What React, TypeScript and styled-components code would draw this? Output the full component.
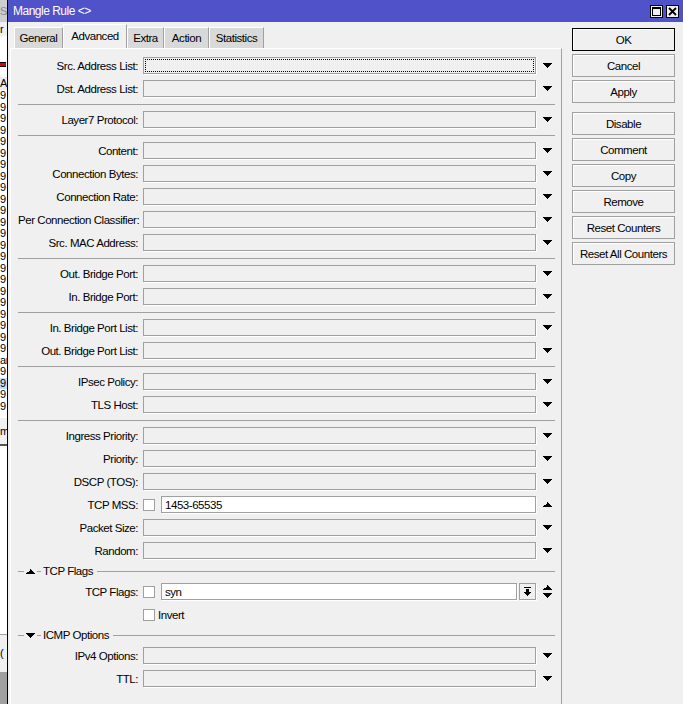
import { Fragment } from 'react';
import styled, { createGlobalStyle } from 'styled-components';

const uiFont = `"Liberation Sans", Arial, sans-serif`;

const GlobalStyle = createGlobalStyle`
  html, body {
    margin: 0;
    padding: 0;
    background: #f0f0f0;
  }
  body {
    font-family: ${uiFont};
    font-size: 11.5px;
    letter-spacing: -0.45px;
    color: #000;
  }
`;

const Screen = styled.div`
  display: flex;
  width: 683px;
  height: 704px;
  overflow: hidden;
`;

/* the rule list window peeking out behind the dialog */
const BackWindow = styled.div`
  width: 7px;
  border-right: 1px solid #000;
  display: flex;
  flex-direction: column;
  overflow: hidden;
  background: #fff;
`;

const BackBand = styled.div<{ $h?: number; $bg: string; $color?: string }>`
  height: ${(p) => (p.$h ? `${p.$h}px` : 'auto')};
  flex: ${(p) => (p.$h ? '0 0 auto' : '1')};
  background: ${(p) => p.$bg};
  color: ${(p) => p.$color || '#000'};
  font-size: 11px;
  line-height: ${(p) => (p.$h ? `${p.$h}px` : 'normal')};
  white-space: nowrap;
  overflow: hidden;
  display: flex;
  align-items: center;
`;

const RedMark = styled.div`
  width: 6px;
  height: 3px;
  background: #e00000;
  border-top: 1px solid #000;
  border-bottom: 1px solid #000;
`;

const Dialog = styled.div`
  flex: 1;
  min-width: 0;
  display: flex;
  flex-direction: column;
  background: #f0f0f0;
`;

const TitleBar = styled.div`
  height: 22px;
  background: #5052c9;
  color: #fff;
  font-size: 12px;
  letter-spacing: -0.5px;
  display: flex;
  align-items: center;
  padding: 0 4px 0 5px;
`;

const TitleText = styled.div`
  flex: 1;
`;

const TitleButton = styled.div`
  width: 13px;
  height: 13px;
  box-sizing: border-box;
  border: 1px solid #000;
  background: #f0f0f0;
  margin-left: 3px;
  display: flex;
  align-items: center;
  justify-content: center;
`;

const Body = styled.div`
  flex: 1;
  display: flex;
  min-height: 0;
`;

const Main = styled.div`
  width: 554px;
  padding-left: 2px;
  box-sizing: border-box;
  display: flex;
  flex-direction: column;
`;

const TabBar = styled.div`
  height: 26px;
  display: flex;
  align-items: flex-end;
  padding-left: 4px;
`;

const Tab = styled.div<{ $active?: boolean; $w: number }>`
  width: ${(p) => p.$w}px;
  height: ${(p) => (p.$active ? 24 : 21)}px;
  box-sizing: border-box;
  background: ${(p) => (p.$active ? '#f0f0f0' : '#d9d9d9')};
  border-top: 1px solid #fff;
  border-left: 1px solid #fff;
  border-right: 1px solid #a0a0a0;
  display: flex;
  align-items: center;
  justify-content: center;
  padding-bottom: ${(p) => (p.$active ? 2 : 0)}px;
`;

const Panel = styled.div`
  flex: 1;
  border-top: 1px solid #fff;
  border-left: 1px solid #fff;
  border-right: 1px solid #a0a0a0;
  padding-top: 5px;
  display: flex;
  flex-direction: column;
`;

const Row = styled.div`
  height: 23px;
  display: flex;
  align-items: center;
  padding-left: 7px;
`;

const Label = styled.div`
  width: 120px;
  flex-shrink: 0;
  margin-right: 5px;
  text-align: right;
  white-space: nowrap;
`;

const Field = styled.div<{ $w?: number; $on?: boolean; $focus?: boolean }>`
  width: ${(p) => p.$w || 393}px;
  height: 17px;
  box-sizing: border-box;
  border: 1px solid #a0a0a0;
  box-shadow: 1px 1px 0 #fff;
  background: ${(p) => (p.$on ? '#fff' : '#f0f0f0')};
  padding: 0 3px;
  display: flex;
  align-items: center;
  flex-shrink: 0;
  outline: ${(p) => (p.$focus ? '1px dotted #000' : 'none')};
  outline-offset: -3px;
`;

const FieldButton = styled.div`
  width: 17px;
  height: 17px;
  box-sizing: border-box;
  margin-left: 2px;
  border: 1px solid #a0a0a0;
  box-shadow: 1px 1px 0 #fff;
  background: #f0f0f0;
  display: flex;
  align-items: center;
  justify-content: center;
`;

const Check = styled.div`
  width: 12px;
  height: 12px;
  box-sizing: border-box;
  border: 1px solid #a0a0a0;
  background: #fff;
  flex-shrink: 0;
  margin-right: 6px;
`;

const CheckText = styled.span`
  margin-left: -3px;
`;

const ArrowSlot = styled.div`
  width: 9px;
  margin-left: 7px;
  display: flex;
  flex-direction: column;
  align-items: center;
  gap: 3px;
`;

const Separator = styled.div`
  height: 1px;
  background: #a0a0a0;
  margin: 4px 6px 3px 7px;
`;

const GroupHeader = styled.div`
  height: 18px;
  display: flex;
  align-items: center;
  padding: 0 6px 0 7px;
`;

const GroupLine = styled.div<{ $w?: number }>`
  height: 1px;
  background: #a0a0a0;
  width: ${(p) => (p.$w ? `${p.$w}px` : 'auto')};
  flex: ${(p) => (p.$w ? '0 0 auto' : '1')};
`;

const GroupIcon = styled.div`
  margin: 0 2px;
  display: flex;
`;

const GroupTitle = styled.div`
  margin: 0 4px 0 2px;
`;

const Side = styled.div`
  padding: 6px 0 0 10px;
  display: flex;
  flex-direction: column;
  gap: 3px;
`;

const Btn = styled.div<{ $default?: boolean }>`
  width: 103px;
  height: 23px;
  box-sizing: border-box;
  border: 1px solid ${(p) => (p.$default ? '#000' : '#a0a0a0')};
  background: #f0f0f0;
  box-shadow: inset 1px 1px 0 #fff;
  white-space: nowrap;
  display: flex;
  align-items: center;
  justify-content: center;
`;

const BtnGap = styled.div`
  height: 3px;
`;

const DownArrow = () => (
  <svg width="9" height="5" viewBox="0 0 9 5" shapeRendering="crispEdges">
    <path d="M0 0h9v1H8v1H7v1H6v1H5v1H4V4H3V3H2V2H1V1H0z" fill="#000" />
  </svg>
);

const UpArrow = () => (
  <svg width="9" height="5" viewBox="0 0 9 5" shapeRendering="crispEdges">
    <path d="M4 0h1v1h1v1h1v1h1v1h1v1H0V4h1V3h2V2h1z" fill="#000" />
  </svg>
);

const ToBottomIcon = () => (
  <svg width="7" height="9" viewBox="0 0 7 9" shapeRendering="crispEdges">
    <path d="M0 0h7v1H0zM2 2h3v3h2v1H6v1H5v1H4v1H3V8H2V7H1V6H0V5h2z" fill="#000" />
  </svg>
);

const MaximizeIcon = () => (
  <svg width="9" height="9" viewBox="0 0 9 9" shapeRendering="crispEdges">
    <path d="M0 0h9v9H0zM1 2v6h7V2z" fill="#000" />
  </svg>
);

const CloseIcon = () => (
  <svg width="9" height="9" viewBox="0 0 9 9">
    <path d="M1 1l7 7M8 1L1 8" stroke="#000" strokeWidth="1.8" />
  </svg>
);

const tabs = [
  { name: 'General', w: 49 },
  { name: 'Advanced', w: 64, active: true },
  { name: 'Extra', w: 37 },
  { name: 'Action', w: 45 },
  { name: 'Statistics', w: 55 },
];

type Item = { label: string; focus?: boolean; mss?: boolean };

const sections: Item[][] = [
  [{ label: 'Src. Address List:', focus: true }, { label: 'Dst. Address List:' }],
  [{ label: 'Layer7 Protocol:' }],
  [
    { label: 'Content:' },
    { label: 'Connection Bytes:' },
    { label: 'Connection Rate:' },
    { label: 'Per Connection Classifier:' },
    { label: 'Src. MAC Address:' },
  ],
  [{ label: 'Out. Bridge Port:' }, { label: 'In. Bridge Port:' }],
  [{ label: 'In. Bridge Port List:' }, { label: 'Out. Bridge Port List:' }],
  [{ label: 'IPsec Policy:' }, { label: 'TLS Host:' }],
  [
    { label: 'Ingress Priority:' },
    { label: 'Priority:' },
    { label: 'DSCP (TOS):' },
    { label: 'TCP MSS:', mss: true },
    { label: 'Packet Size:' },
    { label: 'Random:' },
  ],
];

const buttons = [
  ['OK', 'Cancel', 'Apply'],
  ['Disable', 'Comment', 'Copy', 'Remove', 'Reset Counters', 'Reset All Counters'],
];

const listRows = Array.from({ length: 28 }, (_, i) => i);

const FieldRow = ({ item }: { item: Item }) => {
  if (item.mss) {
    return (
      <Row>
        <Label>{item.label}</Label>
        <Check />
        <Field $w={375} $on>
          1453-65535
        </Field>
        <ArrowSlot>
          <UpArrow />
        </ArrowSlot>
      </Row>
    );
  }
  return (
    <Row>
      <Label>{item.label}</Label>
      <Field $focus={item.focus} />
      <ArrowSlot>
        <DownArrow />
      </ArrowSlot>
    </Row>
  );
};

const Group = ({ title, open }: { title: string; open?: boolean }) => (
  <GroupHeader>
    <GroupLine $w={6} />
    <GroupIcon>{open ? <UpArrow /> : <DownArrow />}</GroupIcon>
    <GroupLine $w={4} />
    <GroupTitle>{title}</GroupTitle>
    <GroupLine />
  </GroupHeader>
);

const App = () => {
  return (
    <Screen>
      <GlobalStyle />
      <BackWindow>
        <BackBand $h={22} $bg="#cdcdcd" $color="#8a8a8a">
          Se
        </BackBand>
        <BackBand $h={14} $bg="#f0f0f0">
          r
        </BackBand>
        <BackBand $h={26} $bg="#fff" />
        <BackBand $h={5} $bg="#fff">
          <RedMark />
        </BackBand>
        <BackBand $h={10} $bg="#fff" />
        <BackBand $h={13} $bg="#ececec">
          Ad
        </BackBand>
        {listRows.map((i) => (
          <BackBand key={i} $h={11.5} $bg={i === 25 ? '#c5dcf5' : '#fff'}>
            {i === 23 ? 'ar' : '9'}
          </BackBand>
        ))}
        <BackBand $h={6} $bg="#fff" />
        <BackBand $h={26} $bg="#f0f0f0">
          m
        </BackBand>
        <BackBand $h={2} $bg="#555" />
        <BackBand $h={188} $bg="#fff" />
        <BackBand $h={1} $bg="#a0a0a0" />
        <BackBand $h={37} $bg="#f0f0f0">
          (
        </BackBand>
        <BackBand $bg="#a0a0a0" />
      </BackWindow>

      <Dialog>
        <TitleBar>
          <TitleText>Mangle Rule &lt;&gt;</TitleText>
          <TitleButton>
            <MaximizeIcon />
          </TitleButton>
          <TitleButton>
            <CloseIcon />
          </TitleButton>
        </TitleBar>

        <Body>
          <Main>
            <TabBar>
              {tabs.map((t) => (
                <Tab key={t.name} $w={t.w} $active={t.active}>
                  {t.name}
                </Tab>
              ))}
            </TabBar>
            <Panel>
              {sections.map((section, si) => (
                <div key={si}>
                  {si > 0 && <Separator />}
                  {section.map((item) => (
                    <FieldRow key={item.label} item={item} />
                  ))}
                </div>
              ))}

              <Group title="TCP Flags" open />
              <Row>
                <Label>TCP Flags:</Label>
                <Check />
                <Field $w={356} $on>
                  syn
                </Field>
                <FieldButton>
                  <ToBottomIcon />
                </FieldButton>
                <ArrowSlot>
                  <UpArrow />
                  <DownArrow />
                </ArrowSlot>
              </Row>
              <Row>
                <Label />
                <Check />
                <CheckText>Invert</CheckText>
              </Row>

              <Group title="ICMP Options" />
              <FieldRow item={{ label: 'IPv4 Options:' }} />
              <FieldRow item={{ label: 'TTL:' }} />
            </Panel>
          </Main>

          <Side>
            {buttons.map((group, gi) => (
              <Fragment key={gi}>
                {gi > 0 && <BtnGap />}
                {group.map((b) => (
                  <Btn key={b} $default={b === 'OK'}>
                    {b}
                  </Btn>
                ))}
              </Fragment>
            ))}
          </Side>
        </Body>
      </Dialog>
    </Screen>
  );
};

export default App;
